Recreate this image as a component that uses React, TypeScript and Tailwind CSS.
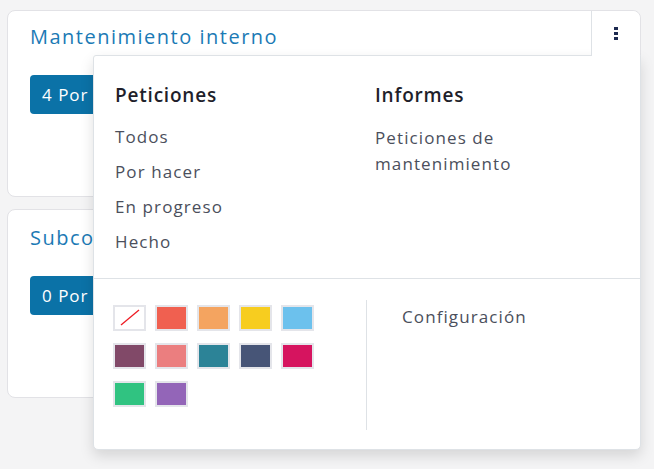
const swatches = [
  "#ffffff",
  "#f06050",
  "#f4a460",
  "#f7cd1f",
  "#6cc1ed",
  "#814968",
  "#eb7e7f",
  "#2c8397",
  "#475577",
  "#d6145f",
  "#30c381",
  "#9365b8",
];

const font = { fontFamily: '"Open Sans", "Liberation Sans", sans-serif' };

function Kebab() {
  return (
    <div className="flex flex-col gap-[2px]">
      <span className="block w-[4px] h-[3px] bg-[#1d2a50]" />
      <span className="block w-[4px] h-[3px] bg-[#1d2a50]" />
      <span className="block w-[4px] h-[3px] bg-[#1d2a50]" />
    </div>
  );
}

function Dropdown() {
  return (
    <div className="absolute left-[85px] top-[44px] right-[-1px] h-[395px] z-10 bg-white border border-[#dee2e6] rounded-b-[5px] rounded-tl-[3px] shadow-[0_6px_14px_rgba(0,0,0,0.13)] flex flex-col">
      <div className="flex px-[21px] pt-[26px] pb-[19px] border-b border-[#dee2e6]">
        <div className="w-[260px] flex flex-col">
          <div className="h-[26px] leading-[26px] text-[19px] tracking-[0.8px] font-semibold text-[#1f1f2b]">
            Peticiones
          </div>
          <div className="mt-[11px] flex flex-col text-[17px] tracking-[1.1px] text-[#4b4f5c]">
            <div className="h-[35px] flex items-center">Todos</div>
            <div className="h-[35px] flex items-center">Por hacer</div>
            <div className="h-[35px] flex items-center">En progreso</div>
            <div className="h-[35px] flex items-center">Hecho</div>
          </div>
        </div>
        <div className="flex flex-col">
          <div className="h-[26px] leading-[26px] text-[19px] tracking-[0.8px] font-semibold text-[#1f1f2b]">
            Informes
          </div>
          <div className="mt-[17px] text-[17px] tracking-[1.1px] leading-[26px] text-[#4b4f5c]">
            Peticiones de
            <br />
            mantenimiento
          </div>
        </div>
      </div>
      <div className="flex flex-1 pt-[21px] pb-[19px]">
        <div className="w-[273px] pl-[19px] pt-[5px] border-r border-[#dee2e6]">
          <div className="grid grid-cols-[repeat(5,33px)] gap-x-[9px] gap-y-[12px]">
            {swatches.map((c, i) => (
              <div
                key={c}
                className="relative w-[33px] h-[26px] border-2 border-[#e4e5ea] overflow-hidden"
                style={{ backgroundColor: c }}
              >
                {i === 0 && (
                  <svg className="absolute inset-0" width="29" height="22" viewBox="0 0 29 22">
                    <line x1="6" y1="18" x2="24" y2="3" stroke="#ee1c24" strokeWidth="1.3" />
                  </svg>
                )}
              </div>
            ))}
          </div>
        </div>
        <div className="pl-[35px] pt-[5px]">
          <div className="h-[24px] leading-[24px] text-[17px] tracking-[1.1px] text-[#4b4f5c]">
            Configuración
          </div>
        </div>
      </div>
    </div>
  );
}

export default function App() {
  return (
    <div
      className="w-[654px] h-[469px] bg-[#f4f4f5] pt-[10px] pl-[7px] pr-[13px] overflow-hidden"
      style={font}
    >
      <div className="flex flex-col gap-[12px]">
        <div className="relative h-[187px] bg-white border border-[#e2e2e6] rounded-[8px] px-[22px] pt-[12px]">
          <div className="text-[20px] tracking-[1.5px] leading-[28px] text-[#1b7ab5]">
            Mantenimiento interno
          </div>
          <button className="mt-[24px] h-[39px] px-[12px] rounded-[4px] bg-[#0b72a7] text-white text-[17px] tracking-[1px]">
            4 Por hacer
          </button>
          <div className="absolute right-0 top-0 w-[49px] h-[45px] z-20 bg-white border-l border-[#dee2e6] rounded-tr-[8px] flex items-center justify-center">
            <Kebab />
          </div>
          <Dropdown />
        </div>
        <div className="h-[189px] bg-white border border-[#e2e2e6] rounded-[8px] px-[22px] pt-[14px]">
          <div className="text-[20px] tracking-[1.5px] leading-[28px] text-[#1b7ab5]">
            Subcontratación
          </div>
          <button className="mt-[24px] h-[39px] px-[12px] rounded-[4px] bg-[#0b72a7] text-white text-[17px] tracking-[1px]">
            0 Por hacer
          </button>
        </div>
      </div>
    </div>
  );
}
